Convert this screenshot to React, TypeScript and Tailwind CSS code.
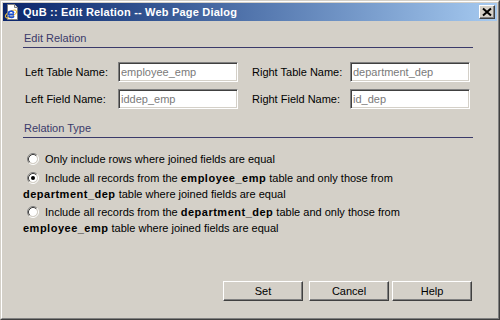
import React from 'react';

// Win2000-style "Edit Relation" web page dialog.
const font = { fontFamily: '"Liberation Sans", Arial, sans-serif' };

function IeIcon() {
  return (
    <svg width="16" height="16" viewBox="0 0 16 16" className="shrink-0">
      <path d="M3.5 0.5h7l3 3v12h-10z" fill="#fff" stroke="#808080" />
      <path d="M10.5 0.5v3h3" fill="#e8e8e8" stroke="#808080" />
      <ellipse cx="7" cy="10" rx="6.2" ry="2.6" transform="rotate(-30 7 10)" fill="none" stroke="#f0c040" strokeWidth="1" />
      <path d="M10 10.5H4.5a2.6 2.6 0 1 1 5.2-1.3M10 12.2a3.2 3.2 0 0 1-5.3-0.3" fill="none" stroke="#1a4fd0" strokeWidth="1.8" />
    </svg>
  );
}

function CloseButton() {
  return (
    <div className="w-[16px] h-[14px] mr-[2px] bg-[#d4d0c8] border border-t-white border-l-white border-r-[#404040] border-b-[#404040] shadow-[inset_-1px_-1px_0_#808080] flex items-start justify-start">
      <svg width="14" height="12" viewBox="0 0 14 12">
        <path d="M3 2.5l8 7M11 2.5l-8 7" stroke="#000" strokeWidth="2" fill="none" />
      </svg>
    </div>
  );
}

function Radio({ checked }: { checked?: boolean }) {
  return (
    <svg width="12" height="12" viewBox="0 0 12 12" className="inline-block align-[-2px] ml-[4px] mr-[6px]">
      <circle cx="6" cy="6" r="4" fill="#fff" />
      <path d="M2.11 9.89A5.5 5.5 0 0 1 9.89 2.11" stroke="#808080" fill="none" />
      <path d="M9.89 2.11A5.5 5.5 0 0 1 2.11 9.89" stroke="#fff" fill="none" />
      <path d="M2.82 9.18A4.5 4.5 0 0 1 9.18 2.82" stroke="#404040" fill="none" />
      <path d="M9.18 2.82A4.5 4.5 0 0 1 2.82 9.18" stroke="#d4d0c8" fill="none" />
      {checked && <circle cx="6" cy="6" r="2" fill="#000" />}
    </svg>
  );
}

function Field({ value }: { value: string }) {
  return (
    <input
      readOnly
      value={value}
      className="w-[120px] h-[20px] px-[2px] bg-white text-[#7a7a7a] text-[11px] outline-none border border-t-[#808080] border-l-[#808080] border-r-white border-b-white shadow-[inset_1px_1px_0_#404040,inset_-1px_-1px_0_#d4d0c8]"
    />
  );
}

function Button({ label, className = '' }: { label: string; className?: string }) {
  return (
    <button className={`w-[80px] h-[20px] bg-[#d4d0c8] text-[11px] text-black border border-t-white border-l-white border-r-[#404040] border-b-[#404040] shadow-[inset_-1px_-1px_0_#808080] ${className}`}>
      {label}
    </button>
  );
}

function B({ children }: { children: React.ReactNode }) {
  return <b className="tracking-[0.5px]">{children}</b>;
}

export default function App() {
  return (
    <div style={font} className="w-[500px] h-[320px] bg-[#d4d0c8] border border-t-[#d4d0c8] border-l-[#d4d0c8] border-r-[#404040] border-b-[#404040]">
      <div className="h-full p-px border border-t-white border-l-white border-r-[#808080] border-b-[#808080] flex flex-col">
        <div className="h-[18px] flex items-center bg-gradient-to-r from-[#0a246a] to-[#a6caf0]">
          <div className="ml-px"><IeIcon /></div>
          <span className="ml-[3px] text-[11px] font-bold text-white tracking-[0.2px]">QuB :: Edit Relation -- Web Page Dialog</span>
          <div className="ml-auto"><CloseButton /></div>
        </div>

        <div className="flex-1 flex flex-col pl-[20px] text-[11px] text-black leading-[13px]">
          <div className="w-[450px] mt-[11px] pb-[2px] pl-px border-b border-[#3a3a6a] text-[#3a3a6a]">Edit Relation</div>

          <div className="mt-[14px] flex flex-col gap-[7px]">
            <div className="flex items-center">
              <span className="w-[95px] pl-[2px]">Left Table Name:</span>
              <Field value="employee_emp" />
              <span className="w-[98px] ml-[14px]">Right Table Name:</span>
              <Field value="department_dep" />
            </div>
            <div className="flex items-center">
              <span className="w-[95px] pl-[2px]">Left Field Name:</span>
              <Field value="iddep_emp" />
              <span className="w-[98px] ml-[14px]">Right Field Name:</span>
              <Field value="id_dep" />
            </div>
          </div>

          <div className="w-[450px] mt-[13px] pb-[2px] pl-px border-b border-[#3a3a6a] text-[#3a3a6a]">Relation Type</div>

          <div className="w-[450px] leading-[16px]">
            <p className="mt-[13px]"><Radio />Only include rows where joined fields are equal</p>
            <p className="mt-[3px]">
              <Radio checked />Include all records from the <B>employee_emp</B> table and only those from<br />
              <B>department_dep</B> table where joined fields are equal
            </p>
            <p className="mt-[2px]">
              <Radio />Include all records from the <B>department_dep</B> table and only those from<br />
              <B>employee_emp</B> table where joined fields are equal
            </p>
          </div>

          <div className="mt-auto mb-[16px] mr-[25px] flex justify-end">
            <Button label="Set" />
            <Button label="Cancel" className="ml-[6px]" />
            <Button label="Help" className="ml-[3px]" />
          </div>
        </div>
      </div>
    </div>
  );
}
